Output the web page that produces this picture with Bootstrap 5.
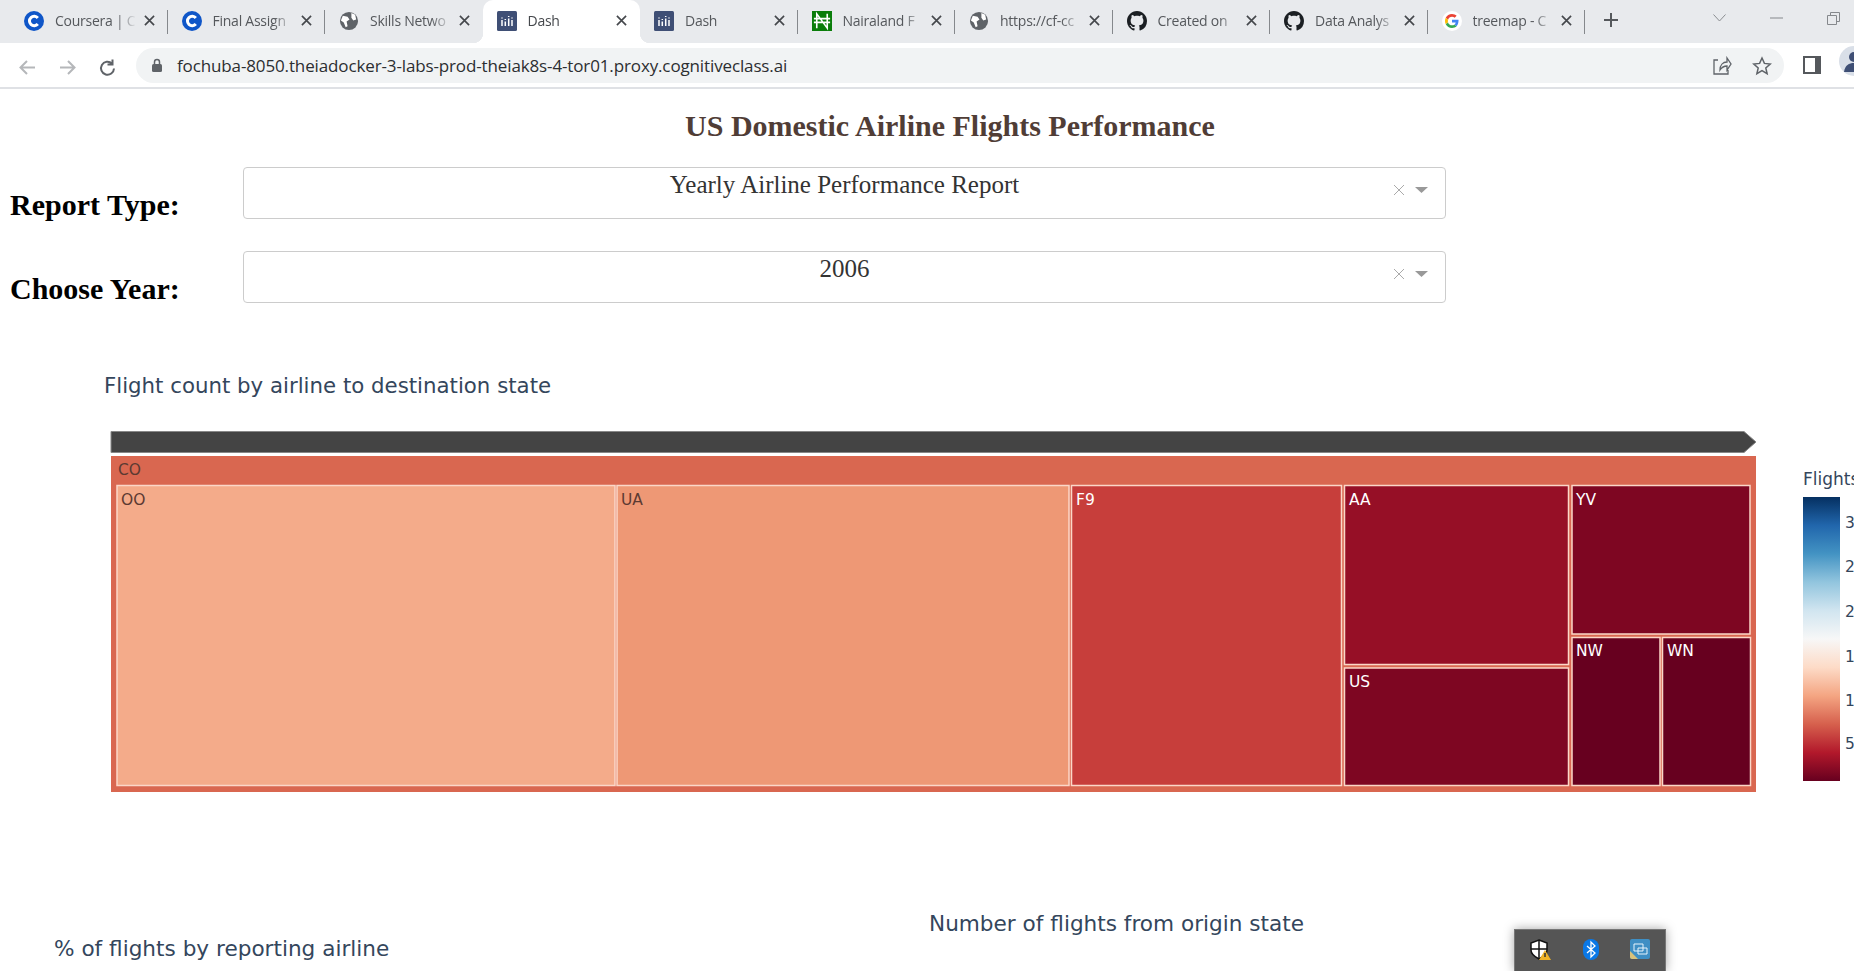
<!DOCTYPE html>
<html lang="en">
<head>
<meta charset="utf-8">
<title>Dash</title>
<link href="https://cdn.jsdelivr.net/npm/bootstrap@5.3.0/dist/css/bootstrap.min.css" rel="stylesheet">
<style>
html,body{height:971px;overflow:hidden;background:#fff}
.tabstrip{height:43px;background:#e8eaed;padding-left:10px;font-family:"Open Sans","Liberation Sans",sans-serif;font-size:14px;color:#55585c}
.tabx{width:157.5px;height:43px;padding:0 13px 2px 14px;position:relative;flex:none}
.tabx.sep::after{content:"";position:absolute;right:0;top:10px;height:24px;width:1px;background:#85888c}
.tabx.on{background:#fff;border-radius:10px 10px 0 0;color:#45484c}
.tabx.on::before{content:"";position:absolute;left:-10px;bottom:0;width:10px;height:10px;background:radial-gradient(circle at 0 0,transparent 10px,#fff 10.5px)}
.tabx.on .tailcorner{position:absolute;right:-10px;bottom:0;width:10px;height:10px;background:radial-gradient(circle at 100% 0,transparent 10px,#fff 10.5px)}
.tabname{flex:1;min-width:0;white-space:nowrap;overflow:hidden;margin-left:11px;letter-spacing:-.25px;-webkit-mask-image:linear-gradient(90deg,#000 72%,transparent 96%);mask-image:linear-gradient(90deg,#000 72%,transparent 96%)}
.tabx .ico{width:20px;height:20px;flex:none}
.closex{width:11px;height:11px;flex:none;margin-left:4px}
.plusbtn{margin-left:18px;margin-bottom:3px}
.winbtns{gap:44px;margin-left:auto;margin-right:14px;padding-bottom:7px}
.addrrow{height:46px;background:#fff;border-bottom:2px solid #dfe1e5;padding-top:5px;overflow:hidden}
.addrbox{background:#f1f3f4;height:35px;border-radius:18px;width:1648px;flex:none;margin-left:12px;padding:0 12px 0 15px;font-family:"Open Sans","Liberation Sans",sans-serif;font-size:17px;letter-spacing:-.13px;color:#2c2e31}
.urltext{margin-left:14px;flex-grow:1}
.sharebtn{margin-right:20px}
.navbtns{width:124px;padding-left:17px;gap:19px;flex:none}
.panelbtn{flex:none;margin:8px 0 0 19px}
.avatarbtn{flex:none;margin:-2px 0 0 18px}
.pagehead{font-family:"Liberation Serif",serif;font-weight:700;font-size:30px;color:#503d36;text-align:center;line-height:34px;margin:20px 0 0 46px}
.fieldrow{height:52px;padding-left:10px;margin-top:24px}
.fieldrow.nextrow{margin-top:32px}
.fieldlab{font-family:"Liberation Serif",serif;font-weight:700;font-size:30px;color:#000;width:233px;flex:none;padding-top:18px;line-height:40px;margin:0}
.ddbox{width:1203px;height:52px;border:1px solid #ccc;border-radius:4px;font-family:"Liberation Serif",serif;font-size:25px;color:#333;position:relative;text-align:center;line-height:34px;background:#fff}
.ddicons{position:absolute;right:12px;top:16px}
.plot{display:block;font-family:"DejaVu Sans",sans-serif;margin-top:37px}
.charthead{font-family:"DejaVu Sans",sans-serif;font-size:21.6px;color:#34465c;line-height:25px;margin:0;font-weight:400;white-space:nowrap}
.lowerrow{height:102px}
.lowerleft{width:929px;flex:none;padding:66px 0 0 54px}
.lowerright{padding-top:41px}
.tray{position:absolute;left:1514px;top:929px;width:152px;height:42px;background:#555;box-shadow:0 0 10px rgba(0,0,0,.35);border:1px solid #777;border-bottom:0;padding:9px 15px 0 15px}
</style>
</head>
<body>
<div class="tabstrip d-flex align-items-center">
  <div class="tabx sep d-flex align-items-center"><svg class="ico" viewBox="0 0 20 20"><circle cx="10" cy="10" r="10" fill="#0f56c8"/><path d="M13.800 7a4.700 4.700 0 1 0 0 6" stroke="#fff" stroke-width="3" fill="none"/></svg><span class="tabname">Coursera | C</span><svg class="closex" viewBox="0 0 12 12"><path d="M1 1l10 10M11 1L1 11" stroke="#45484c" stroke-width="1.800"/></svg></div>
  <div class="tabx sep d-flex align-items-center"><svg class="ico" viewBox="0 0 20 20"><circle cx="10" cy="10" r="10" fill="#0f56c8"/><path d="M13.800 7a4.700 4.700 0 1 0 0 6" stroke="#fff" stroke-width="3" fill="none"/></svg><span class="tabname">Final Assign</span><svg class="closex" viewBox="0 0 12 12"><path d="M1 1l10 10M11 1L1 11" stroke="#45484c" stroke-width="1.800"/></svg></div>
  <div class="tabx d-flex align-items-center"><svg class="ico" viewBox="0 0 21 21"><circle cx="10.500" cy="10.500" r="9.500" fill="#5f6368"/><path d="M4 5l5 1 2 3-3 2 1 5-2 1-2-5-3-2zM13 2l4 2 1 5-3 1-2-3z" fill="#fff"/></svg><span class="tabname">Skills Netwo</span><svg class="closex" viewBox="0 0 12 12"><path d="M1 1l10 10M11 1L1 11" stroke="#45484c" stroke-width="1.800"/></svg></div>
  <div class="tabx on d-flex align-items-center"><svg class="ico" viewBox="0 0 20 20"><rect width="20" height="20" rx="1.500" fill="#3f4f75"/><path d="M5 6.500v1M5 9v6M8.300 8v1M8.300 10.500v4.500M11.700 5v1M11.700 7.500v7.500M15 6.500v1M15 9v6" stroke="#fff" stroke-width="1.500"/></svg><span class="tabname">Dash</span><svg class="closex" viewBox="0 0 12 12"><path d="M1 1l10 10M11 1L1 11" stroke="#45484c" stroke-width="1.800"/></svg><span class="tailcorner"></span></div>
  <div class="tabx sep d-flex align-items-center"><svg class="ico" viewBox="0 0 20 20"><rect width="20" height="20" rx="1.500" fill="#3f4f75"/><path d="M5 6.500v1M5 9v6M8.300 8v1M8.300 10.500v4.500M11.700 5v1M11.700 7.500v7.500M15 6.500v1M15 9v6" stroke="#fff" stroke-width="1.500"/></svg><span class="tabname">Dash</span><svg class="closex" viewBox="0 0 12 12"><path d="M1 1l10 10M11 1L1 11" stroke="#45484c" stroke-width="1.800"/></svg></div>
  <div class="tabx sep d-flex align-items-center"><svg class="ico" viewBox="0 0 21 21"><rect width="21" height="21" fill="#0a7d0a"/><path d="M5 18V3l11 15V3M2 8h17M2 12h17" stroke="#fff" stroke-width="1.700" fill="none"/></svg><span class="tabname">Nairaland F</span><svg class="closex" viewBox="0 0 12 12"><path d="M1 1l10 10M11 1L1 11" stroke="#45484c" stroke-width="1.800"/></svg></div>
  <div class="tabx sep d-flex align-items-center"><svg class="ico" viewBox="0 0 21 21"><circle cx="10.500" cy="10.500" r="9.500" fill="#5f6368"/><path d="M4 5l5 1 2 3-3 2 1 5-2 1-2-5-3-2zM13 2l4 2 1 5-3 1-2-3z" fill="#fff"/></svg><span class="tabname">https://cf-cc</span><svg class="closex" viewBox="0 0 12 12"><path d="M1 1l10 10M11 1L1 11" stroke="#45484c" stroke-width="1.800"/></svg></div>
  <div class="tabx sep d-flex align-items-center"><svg class="ico" viewBox="0 0 16 16"><path fill="#1b1f23" d="M8 0C3.580 0 0 3.580 0 8c0 3.540 2.290 6.530 5.470 7.590.4.070.55-.17.55-.38 0-.19-.01-.82-.01-1.490-2.010.37-2.530-.49-2.690-.94-.09-.23-.48-.94-.82-1.130-.28-.15-.68-.52-.01-.53.63-.01 1.080.58 1.230.82.72 1.210 1.870.87 2.330.66.07-.52.28-.87.51-1.070-1.780-.2-3.640-.89-3.640-3.950 0-.87.31-1.590.82-2.150-.08-.2-.36-1.020.08-2.120 0 0 .67-.21 2.200.82.64-.18 1.320-.27 2-.27s1.360.09 2 .27c1.530-1.040 2.200-.82 2.200-.82.44 1.100.16 1.920.08 2.120.51.56.82 1.270.82 2.150 0 3.070-1.870 3.750-3.650 3.950.29.25.54.73.54 1.480 0 1.070-.01 1.930-.01 2.200 0 .21.15.46.55.38A8.010 8.010 0 0 0 16 8c0-4.420-3.580-8-8-8z"/></svg><span class="tabname">Created on</span><svg class="closex" viewBox="0 0 12 12"><path d="M1 1l10 10M11 1L1 11" stroke="#45484c" stroke-width="1.800"/></svg></div>
  <div class="tabx sep d-flex align-items-center"><svg class="ico" viewBox="0 0 16 16"><path fill="#1b1f23" d="M8 0C3.580 0 0 3.580 0 8c0 3.540 2.290 6.530 5.470 7.590.4.070.55-.17.55-.38 0-.19-.01-.82-.01-1.490-2.010.37-2.530-.49-2.690-.94-.09-.23-.48-.94-.82-1.130-.28-.15-.68-.52-.01-.53.63-.01 1.080.58 1.230.82.72 1.210 1.870.87 2.330.66.07-.52.28-.87.51-1.070-1.780-.2-3.640-.89-3.640-3.950 0-.87.31-1.590.82-2.150-.08-.2-.36-1.020.08-2.120 0 0 .67-.21 2.200.82.64-.18 1.320-.27 2-.27s1.360.09 2 .27c1.530-1.040 2.200-.82 2.200-.82.44 1.100.16 1.920.08 2.120.51.56.82 1.270.82 2.150 0 3.070-1.870 3.750-3.650 3.950.29.25.54.73.54 1.480 0 1.070-.01 1.930-.01 2.200 0 .21.15.46.55.38A8.010 8.010 0 0 0 16 8c0-4.420-3.580-8-8-8z"/></svg><span class="tabname">Data Analys</span><svg class="closex" viewBox="0 0 12 12"><path d="M1 1l10 10M11 1L1 11" stroke="#45484c" stroke-width="1.800"/></svg></div>
  <div class="tabx sep d-flex align-items-center"><svg class="ico" viewBox="0 0 48 48"><circle cx="24" cy="24" r="24" fill="#fff"/><g transform="translate(7.200 7.200) scale(.7)"><path fill="#ea4335" d="M24 9.500c3.500 0 6.700 1.300 9.100 3.500l6.800-6.800C35.800 2.400 30.300 0 24 0 14.600 0 6.500 5.400 2.600 13.200l7.900 6.200C12.400 13.700 17.700 9.500 24 9.500z"/><path fill="#4285f4" d="M46.500 24.500c0-1.600-.2-3.100-.4-4.500H24v9h12.700c-.6 2.900-2.200 5.300-4.700 7l7.300 5.700c4.300-4 6.700-9.900 6.700-17.200z"/><path fill="#fbbc05" d="M10.500 28.600c-.5-1.400-.8-3-.8-4.600s.3-3.200.8-4.600l-7.900-6.200C.9 16.500 0 20.100 0 24s.9 7.500 2.600 10.800z"/><path fill="#34a853" d="M24 48c6.500 0 11.900-2.100 15.900-5.800L32 36.500c-2.100 1.400-4.800 2.300-8 2.300-6.300 0-11.600-4.200-13.500-9.900l-7.900 6.200C6.500 42.600 14.600 48 24 48z"/></g></svg><span class="tabname">treemap - C</span><svg class="closex" viewBox="0 0 12 12"><path d="M1 1l10 10M11 1L1 11" stroke="#45484c" stroke-width="1.800"/></svg></div>
  <svg class="plusbtn" width="16" height="16" viewBox="0 0 16 16"><path d="M8 1v14M1 8h14" stroke="#55585c" stroke-width="2"/></svg>
  <div class="winbtns d-flex align-items-center"><svg width="13" height="8" viewBox="0 0 13 8"><path d="M.5.500l6 6.500 6-6.500" stroke="#8a8d91" fill="none"/></svg><svg width="13" height="2" viewBox="0 0 13 2"><path d="M0 1h13" stroke="#85888c"/></svg><svg width="13" height="13" viewBox="0 0 13 13"><path d="M.5 3.500h9v9h-9zM3.500 3.500v-3h9v9h-3" stroke="#85888c" fill="none"/></svg></div>
</div>
<div class="addrrow d-flex">
  <div class="navbtns d-flex align-items-center"><svg width="21" height="21" viewBox="0 0 21 21"><path d="M18 10.500H4M10 4l-6.500 6.500L10 17" stroke="#b5b7ba" stroke-width="2" fill="none"/></svg><svg width="21" height="21" viewBox="0 0 21 21"><path d="M3 10.500h14M11 4l6.500 6.500L11 17" stroke="#b5b7ba" stroke-width="2" fill="none"/></svg><svg width="20" height="20" viewBox="0 0 20 20"><path d="M17 10.500a6.500 6.500 0 1 1-2-5M15.500 1.500v5h-5" stroke="#5f6368" stroke-width="2" fill="none"/></svg></div>
  <div class="addrbox d-flex align-items-center"><svg width="12" height="15" viewBox="0 0 12 15"><rect x="1" y="6" width="10" height="8" rx="1.500" fill="#5f6368"/><path d="M3.500 6V4a2.500 2.500 0 0 1 5 0v2" stroke="#5f6368" stroke-width="1.500" fill="none"/></svg><span class="urltext">fochuba-8050.theiadocker-3-labs-prod-theiak8s-4-tor01.proxy.cognitiveclass.ai</span><svg class="sharebtn" width="20" height="20" viewBox="0 0 20 20"><path d="M6 4H2v14h14v-4M8 14c0-5 3-8 7-8V2l4 6-4 6v-4c-3 0-5 1-7 4z" stroke="#5f6368" stroke-width="1.300" fill="none"/></svg><svg width="20" height="20" viewBox="0 0 20 20"><path d="M10 2l2.400 5.400 5.800.6-4.400 3.900 1.300 5.700-5.100-3-5.100 3 1.300-5.700L1.800 8l5.800-.6z" stroke="#5f6368" stroke-width="1.500" fill="none"/></svg></div>
  <svg class="panelbtn" width="18" height="18" viewBox="0 0 18 18"><path d="M1 1h16v16H1z" fill="#fff" stroke="#55585c" stroke-width="2"/><path d="M12 1h5v16h-5z" fill="#55585c"/></svg>
  <svg class="avatarbtn" width="30" height="30" viewBox="0 0 30 30"><circle cx="15" cy="15" r="15" fill="#d9dfe8"/><circle cx="15" cy="11" r="5" fill="#3f4f75"/><path d="M5 26c1-7 5-9 10-9s9 2 10 9z" fill="#3f4f75"/></svg>
</div>
<h1 class="pagehead">US Domestic Airline Flights Performance</h1>
<div class="fieldrow d-flex">
  <h2 class="fieldlab">Report Type:</h2>
  <div class="ddbox">Yearly Airline Performance Report<svg class="ddicons" width="40" height="12" viewBox="0 0 40 12"><path d="M1 1l10 10M11 1L1 11" stroke="#aaa" stroke-width="1"/><path d="M22 3h13l-6.500 6z" fill="#999"/></svg></div>
</div>
<div class="fieldrow nextrow d-flex">
  <h2 class="fieldlab">Choose Year:</h2>
  <div class="ddbox">2006<svg class="ddicons" width="40" height="12" viewBox="0 0 40 12"><path d="M1 1l10 10M11 1L1 11" stroke="#aaa" stroke-width="1"/><path d="M22 3h13l-6.500 6z" fill="#999"/></svg></div>
</div>
<svg class="plot" width="1854" height="530" viewBox="0 340 1854 530">
  <defs><linearGradient id="rdbu" x1="0" y1="1" x2="0" y2="0">
    <stop offset="0" stop-color="#67001f"/><stop offset=".1" stop-color="#b2182b"/><stop offset=".2" stop-color="#d6604d"/><stop offset=".3" stop-color="#f4a582"/><stop offset=".4" stop-color="#fddbc7"/><stop offset=".5" stop-color="#f7f7f7"/><stop offset=".6" stop-color="#d1e5f0"/><stop offset=".7" stop-color="#92c5de"/><stop offset=".8" stop-color="#4393c3"/><stop offset=".9" stop-color="#2166ac"/><stop offset="1" stop-color="#053061"/></linearGradient></defs>
  <text x="104" y="393" font-size="21.300" fill="#34465c">Flight count by airline to destination state</text>
  <path d="M111 431.500H1744L1756 442 1744 452.500H111z" fill="#444" stroke="#888"/>
  <rect x="111" y="456" width="1645" height="336" fill="#d96750"/>
  <text x="118" y="475" font-size="15.500" fill="#5c3a32">CO</text>
  <g stroke="#fbd7c8" stroke-width="1.500">
    <rect x="117" y="485.500" width="498" height="300" fill="#f4ab8a"/>
    <rect x="617" y="485.500" width="452" height="300" fill="#ee9875"/>
    <rect x="1071.500" y="485.500" width="270" height="300" fill="#c73e3b"/>
    <rect x="1344.500" y="485.500" width="224" height="179" fill="#960f26"/>
    <rect x="1344.500" y="668" width="224" height="117.500" fill="#7e0622"/>
    <rect x="1572" y="485.500" width="178" height="148.500" fill="#7e0622"/>
    <rect x="1572" y="637.500" width="88" height="148" fill="#67001f"/>
    <rect x="1662.500" y="637.500" width="88" height="148" fill="#67001f"/>
  </g>
  <g font-size="15.500">
    <text x="121" y="505" fill="#5c3a32">OO</text>
    <text x="621" y="505" fill="#5c3a32">UA</text>
    <text x="1076" y="505" fill="#fff">F9</text>
    <text x="1349" y="505" fill="#fff">AA</text>
    <text x="1349" y="687" fill="#fff">US</text>
    <text x="1576" y="505" fill="#fff">YV</text>
    <text x="1576" y="656" fill="#fff">NW</text>
    <text x="1667" y="656" fill="#fff">WN</text>
  </g>
  <text x="1803" y="485" font-size="17" fill="#34465c">Flights</text>
  <rect x="1803" y="497" width="37" height="284" fill="url(#rdbu)"/>
  <g font-size="15.500" fill="#34465c">
    <text x="1845" y="528">3</text><text x="1845" y="572">2</text><text x="1845" y="617">2</text><text x="1845" y="662">1</text><text x="1845" y="706">1</text><text x="1845" y="749">5</text>
  </g>
</svg>
<div class="lowerrow d-flex">
  <div class="lowerleft"><h3 class="charthead">% of flights by reporting airline</h3></div>
  <div class="lowerright"><h3 class="charthead">Number of flights from origin state</h3></div>
</div>
<div class="tray d-flex align-items-start justify-content-between">
  <svg width="21" height="21" viewBox="0 0 21 21"><path d="M9 1l8 3v7c0 4-4 7-8 9-4-2-8-5-8-9V4z" fill="#fff" stroke="#111" stroke-width="1.500"/><path d="M9 1v19M1 10h16" stroke="#111" stroke-width="1.500"/><path d="M15 11l6 10H9z" fill="#f0b429"/><path d="M15 14v4" stroke="#333" stroke-width="1.500"/></svg>
  <svg width="16" height="21" viewBox="0 0 16 21"><rect width="16" height="21" rx="8" fill="#0a78e6"/><path d="M4 7l8 7-4 4V3l4 4-8 7" stroke="#fff" stroke-width="1.300" fill="none"/></svg>
  <svg width="20" height="20" viewBox="0 0 20 20"><rect width="20" height="20" rx="2" fill="#3f8fc4"/><path d="M0 12l8 8H2a2 2 0 0 1-2-2z" fill="#d9c27a"/><path d="M4 5h9v7H4zM8 9h9v6H8z" stroke="#e8f4fb" fill="none"/></svg>
</div>
</body>
</html>
